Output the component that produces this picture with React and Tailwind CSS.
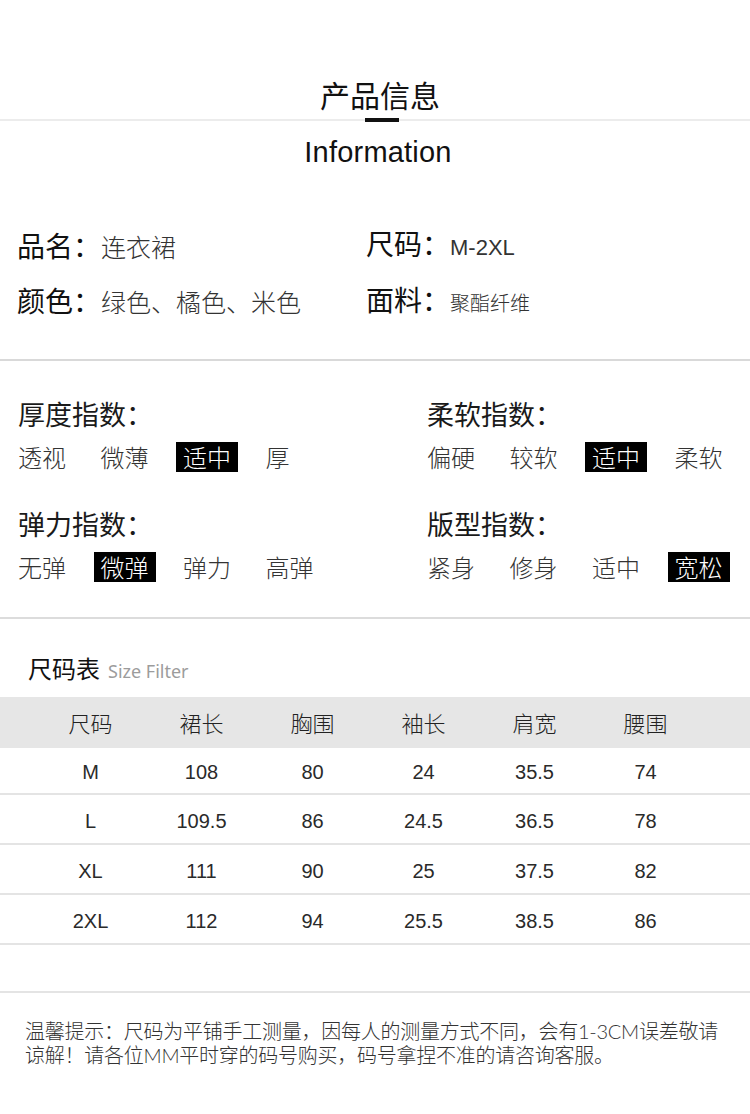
import React from "react";

const cjk = { fontFamily: '"Noto Sans CJK SC", "Noto Sans", sans-serif' };
const latin = { fontFamily: '"Liberation Sans", Arial, sans-serif' };
const mixed = { fontFamily: 'Lato, "Noto Sans CJK SC", sans-serif' };

const indices = [
  { title: "厚度指数：", opts: ["透视", "微薄", "适中", "厚"], active: 2 },
  { title: "柔软指数：", opts: ["偏硬", "较软", "适中", "柔软"], active: 2 },
  { title: "弹力指数：", opts: ["无弹", "微弹", "弹力", "高弹"], active: 1 },
  { title: "版型指数：", opts: ["紧身", "修身", "适中", "宽松"], active: 3 },
];

const headers = ["尺码", "裙长", "胸围", "袖长", "肩宽", "腰围"];

const rows = [
  ["M", "108", "80", "24", "35.5", "74"],
  ["L", "109.5", "86", "24.5", "36.5", "78"],
  ["XL", "111", "90", "25", "37.5", "82"],
  ["2XL", "112", "94", "25.5", "38.5", "86"],
];

function Index({ title, opts, active }) {
  return (
    <div>
      <p className="h-[28px] text-[27px] leading-[28px] text-[#1a1a1a]">{title}</p>
      <div className="mt-[14px] flex gap-[34.5px]">
        {opts.map((o, i) => (
          <span
            key={o}
            className={
              i === active
                ? "-mx-[7px] bg-black px-[7px] text-[24px] font-light leading-[30px] text-white"
                : "text-[24px] font-light leading-[30px] text-[#333]"
            }
          >
            {o}
          </span>
        ))}
      </div>
    </div>
  );
}

export default function App() {
  return (
    <div className="w-[750px] bg-white pb-[40px]" style={cjk}>
      {/* heading */}
      <div className="pt-[79px]">
        <h1 className="pl-[10px] text-center text-[30px] font-normal leading-[30px] text-[#111]">
          产品信息
        </h1>
        <div className="relative mt-[10px] h-[2px] bg-[#ececec]">
          <div className="absolute left-[365px] top-[-1px] h-[4px] w-[34px] bg-[#111]" />
        </div>
        <p
          className="mt-[17px] pl-[6px] text-center text-[29px] leading-[29px] tracking-[0.2px] text-[#111]"
          style={latin}
        >
          Information
        </p>
      </div>

      {/* basic info */}
      <div className="grid grid-cols-[349px_1fr] pl-[17px] pt-[52px]">
        <InfoRow label="品名：" value="连衣裙" />
        <InfoRow label="尺码：" value="M-2XL" latinValue />
        <InfoRow label="颜色：" value="绿色、橘色、米色" />
        <InfoRow label="面料：" value="聚酯纤维" small />
      </div>
      <div className="mt-[30px] h-[2px] bg-[#d9d9d9]" />

      {/* indices */}
      <div className="grid grid-cols-[409px_1fr] gap-y-[38px] pl-[18px] pt-[39px]">
        {indices.map((d) => (
          <Index key={d.title} {...d} />
        ))}
      </div>
      <div className="mt-[35px] h-[2px] bg-[#dcdcdc]" />

      {/* size chart */}
      <div className="flex items-baseline gap-[8px] pl-[28px] pt-[37px]">
        <span className="text-[24px] leading-[24px] text-[#111]">尺码表</span>
        <span className="text-[18px] text-[#9c9c9c]" style={{ fontFamily: '"Noto Sans", "Open Sans", sans-serif' }}>
          Size Filter
        </span>
      </div>
      <div className="mt-[12px] bg-[#e6e6e6]">
        <div className="ml-[35px] grid h-[51px] w-[666px] grid-cols-6 items-center">
          {headers.map((h) => (
            <span key={h} className="text-center text-[22px] font-light text-[#222]">
              {h}
            </span>
          ))}
        </div>
      </div>
      {rows.map((r, idx) => (
        <div key={r[0]} className="border-b-2 border-[#e4e4e4]">
          <div
            className={
              "ml-[35px] grid w-[666px] grid-cols-6 items-center pt-[3px] " +
              (idx === 0 ? "h-[45px]" : "h-[48px]")
            }
          >
            {r.map((c, i) => (
              <span key={i} className="text-center text-[20px] text-[#2a2a2a]" style={latin}>
                {c}
              </span>
            ))}
          </div>
        </div>
      ))}
      <div className="h-[48px] border-b-2 border-[#e4e4e4]" />

      {/* note */}
      <div
        className="pl-[25px] pt-[26px] text-[20px] font-light tracking-[-0.25px] text-[#333] whitespace-nowrap"
        style={mixed}
      >
        <p className="leading-[24px]">温馨提示：尺码为平铺手工测量，因每人的测量方式不同，会有1-3CM误差敬请</p>
        <p className="leading-[24px]">谅解！请各位MM平时穿的码号购买，码号拿捏不准的请咨询客服。</p>
      </div>
    </div>
  );
}

function InfoRow({ label, value, latinValue, small }) {
  return (
    <div className="flex h-[55px] items-center">
      <div className="flex items-baseline">
        <span className="text-[28px] leading-[28px] text-[#111]">{label}</span>
        <span
          className={
            latinValue
              ? "text-[22px] text-[#333]"
              : small
              ? "text-[20px] font-light text-[#333]"
              : "text-[25px] font-light text-[#333]"
          }
          style={latinValue ? latin : undefined}
        >
          {value}
        </span>
      </div>
    </div>
  );
}
